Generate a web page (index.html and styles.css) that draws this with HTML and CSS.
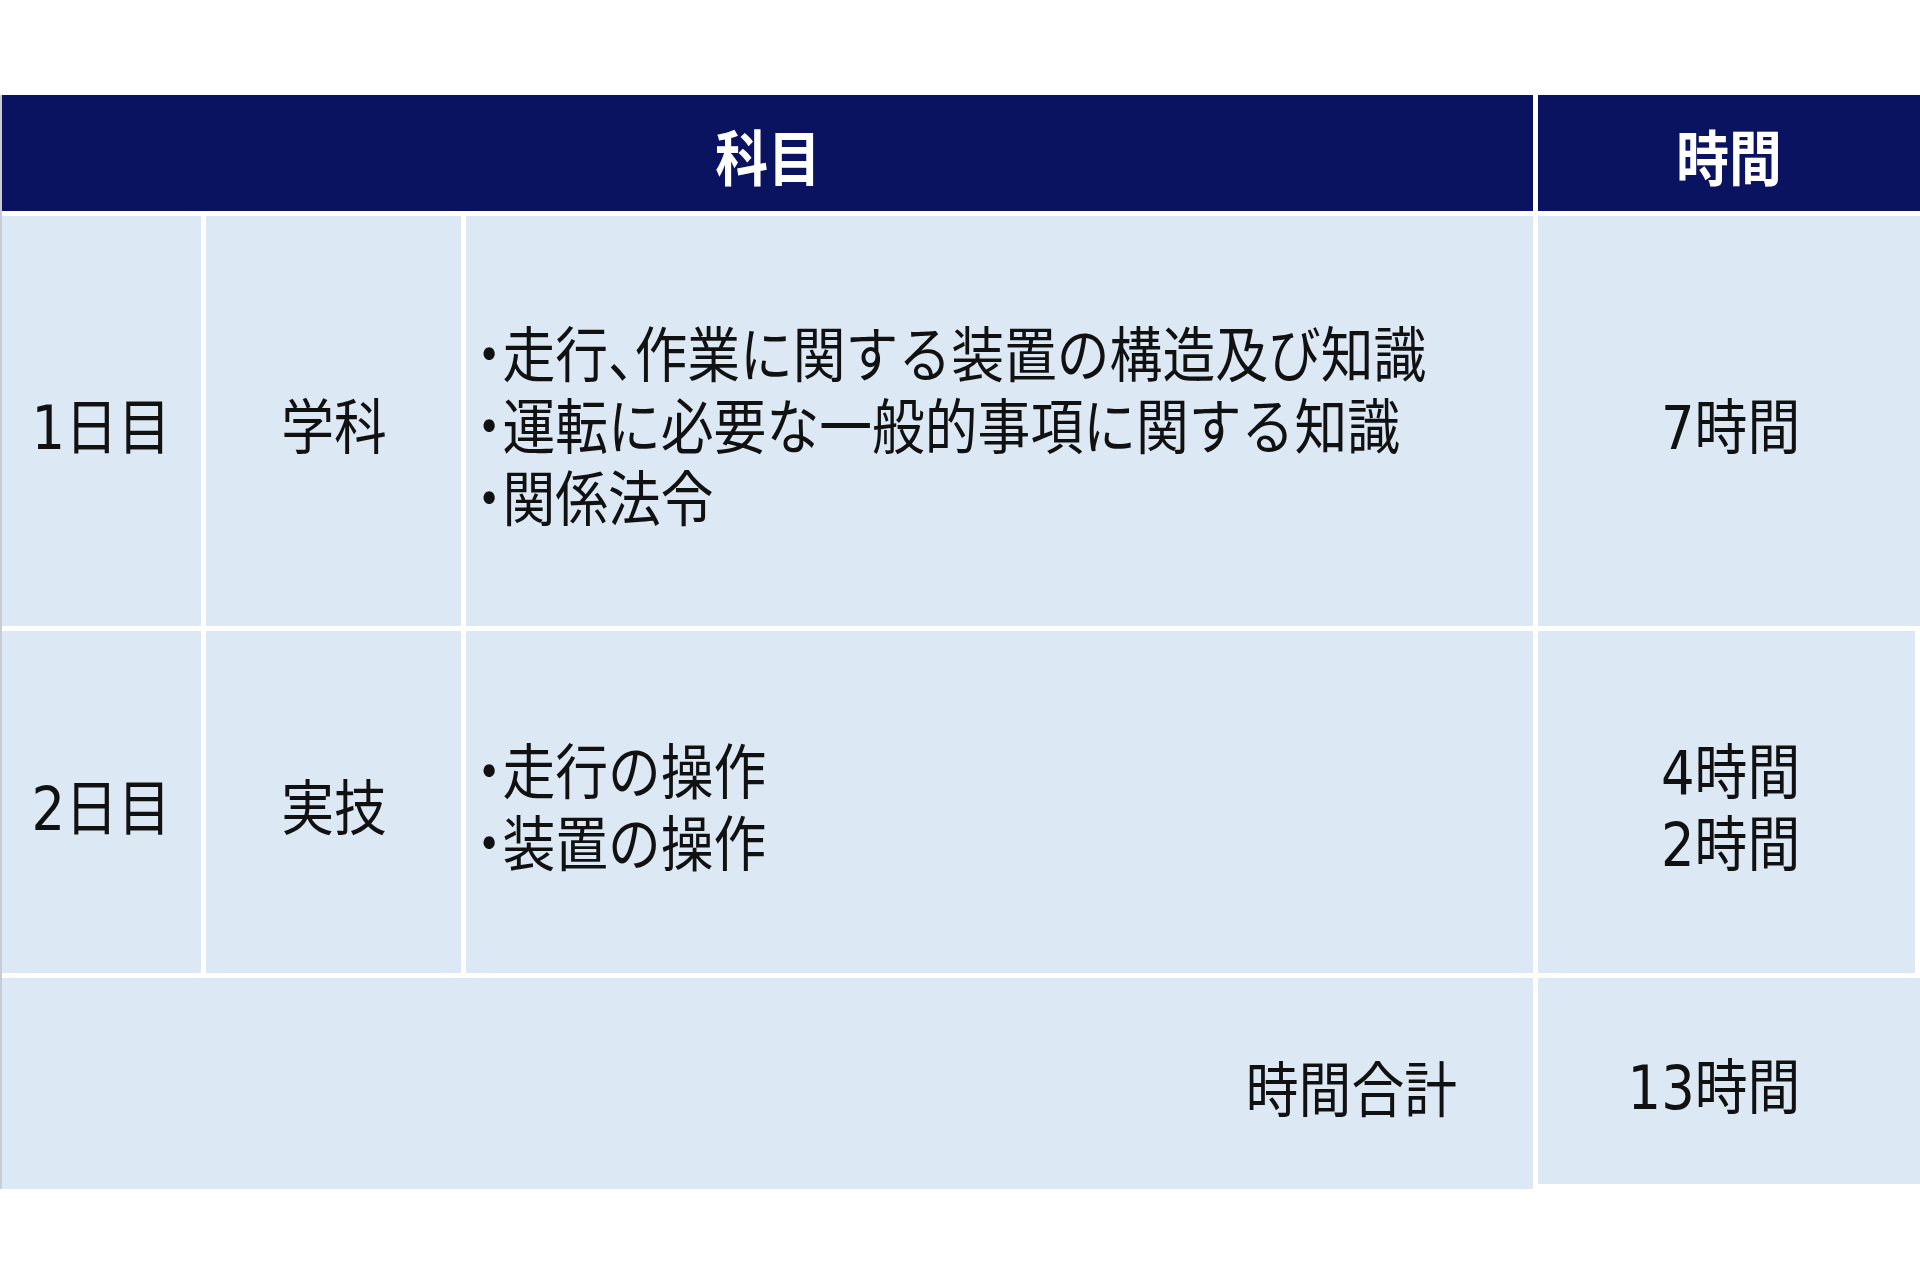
FILE: index.html
```html
<!DOCTYPE html>
<html lang="ja">
<head>
<meta charset="utf-8">
<title>科目と時間</title>
<link rel="stylesheet" href="styles.css">
</head>
<body>
<div class="page">
  <div class="table">
    <div class="cell head head-subject"><span class="t">科目</span></div>
    <div class="cell head head-time"><span class="t">時間</span></div>

    <div class="cell center"><span class="t">1日目</span></div>
    <div class="cell center"><span class="t">学科</span></div>
    <div class="cell list">
      <div class="t left">
        <div class="li">・走行、作業に関する装置の構造及び知識</div>
        <div class="li">・運転に必要な一般的事項に関する知識</div>
        <div class="li">・関係法令</div>
      </div>
    </div>
    <div class="cell time"><div class="t right"><div class="li">7時間</div></div></div>

    <div class="cell center"><span class="t">2日目</span></div>
    <div class="cell center"><span class="t">実技</span></div>
    <div class="cell list">
      <div class="t left">
        <div class="li">・走行の操作</div>
        <div class="li">・装置の操作</div>
      </div>
    </div>
    <div class="cell time time-narrow"><div class="t right"><div class="li">4時間</div><div class="li">2時間</div></div></div>

    <div class="cell total-label"><span class="t right">時間合計</span></div>
    <div class="cell time time-total"><div class="t right"><div class="li">13時間</div></div></div>
  </div>
</div>
</body>
</html>
```

FILE: styles.css
```css
html, body {
  margin: 0;
  padding: 0;
  background: #ffffff;
}

body {
  width: 1920px;
  height: 1280px;
  overflow: hidden;
  font-family: "Noto Sans CJK JP", "Noto Sans", sans-serif;
  color: #111111;
}

.page {
  padding-top: 95px;
}

.table {
  display: grid;
  grid-template-columns: 199px 255px 1067px 382px;
  grid-template-rows: 116px 410px 342px 211px;
  gap: 5px;
  border-left: 2px solid #c9cdd3;
  width: 1918px;
}

.cell {
  background: #dce9f5;
  display: flex;
  align-items: center;
  justify-content: center;
  font-family: "DejaVu Sans", "Noto Sans CJK JP", sans-serif;
  font-size: 60px;
  line-height: 72px;
  white-space: nowrap;
  min-width: 0;
  padding-top: 14px;
  box-sizing: border-box;
}

.head {
  background: #0a1360;
  color: #ffffff;
  font-weight: 700;
}

.head-subject {
  grid-column: 1 / 4;
}

.head-time {
  grid-column: 4;
}

.t {
  display: inline-block;
  transform: scaleX(0.88);
  transform-origin: center center;
}

.t.left {
  transform-origin: left center;
}

.t.right {
  transform-origin: right center;
  text-align: right;
}

.list {
  justify-content: flex-start;
  padding-left: 10px;
}

.list .li {
  font-feature-settings: "halt" 1;
}

.time {
  justify-content: flex-end;
  padding-right: 120px;
}

.time-narrow {
  margin-right: 5px;
  padding-right: 115px;
}

.total-label {
  grid-column: 1 / 4;
  justify-content: flex-end;
  padding-right: 76px;
}

.time-total {
  align-self: start;
  height: 206px;
}
```
